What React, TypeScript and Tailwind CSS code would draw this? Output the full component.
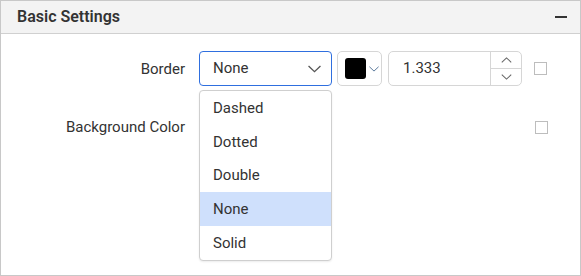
import React from 'react';

const font = { fontFamily: 'Roboto, "Liberation Sans", sans-serif' };

const Chevron = ({ className }: { className?: string }) => (
  <svg viewBox="0 0 12 7" className={className} fill="none" stroke="currentColor" strokeWidth={1.2}>
    <path d="M0.5 0.8 L6 6 L11.5 0.8" />
  </svg>
);

const options = ['Dashed', 'Dotted', 'Double', 'None', 'Solid'];
const itemHeights = ['h-[34px]', 'h-[34px]', 'h-[33px]', 'h-[34px]', 'h-[34px]'];

export default function App() {
  return (
    <div className="relative w-[581px] h-[276px] bg-white text-[#333] text-[15px]" style={font}>
      <div className="w-full h-full border border-[#c8c8c8] flex flex-col">
        {/* Header */}
        <div className="h-[33px] bg-[#f3f3f3] border-b border-[#d0d0d0] flex items-center justify-between pl-[16px] pr-[12px] shrink-0">
          <span className="font-semibold text-[16px] text-[#333]">Basic Settings</span>
          <span className="w-[12px] h-[2px] bg-[#333] mr-[1px]" />
        </div>

        {/* Rows */}
        <div className="pt-[17px] flex flex-col">
          <div className="flex items-center h-[35px]">
            <div className="w-[184px] text-right pt-[2px]">Border</div>
            <div className="ml-[14px] w-[133px] h-[35px] border border-[#2f6fdf] rounded-[4px] flex items-center justify-between pl-[13px] pr-[10px]">
              <span>None</span>
              <Chevron className="w-[13px] h-[8px] text-[#555]" />
            </div>
            <div className="ml-[5px] w-[45px] h-[35px] border border-[#d6d6d6] rounded-[5px] flex items-center pl-[7px]">
              <div className="w-[21px] h-[21px] bg-black rounded-[3px]" />
              <Chevron className="ml-[3px] w-[10px] h-[6px] text-[#5b7a9c]" />
            </div>
            <div className="ml-[6px] w-[134px] h-[35px] border border-[#d6d6d6] rounded-[5px] flex">
              <div className="flex-1 flex items-center pl-[14px]">1.333</div>
              <div className="w-[31px] border-l border-[#d6d6d6] flex flex-col">
                <div className="flex-1 flex items-center justify-center border-b border-[#d6d6d6]">
                  <Chevron className="w-[11px] h-[6px] text-[#666] rotate-180" />
                </div>
                <div className="flex-1 flex items-center justify-center">
                  <Chevron className="w-[11px] h-[6px] text-[#666]" />
                </div>
              </div>
            </div>
            <div className="ml-[12px] w-[13px] h-[13px] border border-[#bdbdbd]" />
          </div>

          <div className="flex items-center h-[35px] mt-[24px]">
            <div className="w-[184px] text-right">Background Color</div>
            <div className="ml-[350px] w-[13px] h-[13px] border border-[#bdbdbd]" />
          </div>
        </div>
      </div>

      {/* Dropdown popup */}
      <div className="absolute left-[199px] top-[90px] w-[133px] border border-[#cfcfcf] rounded-[4px] bg-white shadow-[0_1px_2px_rgba(0,0,0,0.08)] overflow-hidden">
        {options.map((o, i) => (
          <div
            key={o}
            className={`${itemHeights[i]} flex items-center pl-[13px] ${o === 'None' ? 'bg-[#cfe0fc]' : ''}`}
          >
            {o}
          </div>
        ))}
      </div>
    </div>
  );
}
